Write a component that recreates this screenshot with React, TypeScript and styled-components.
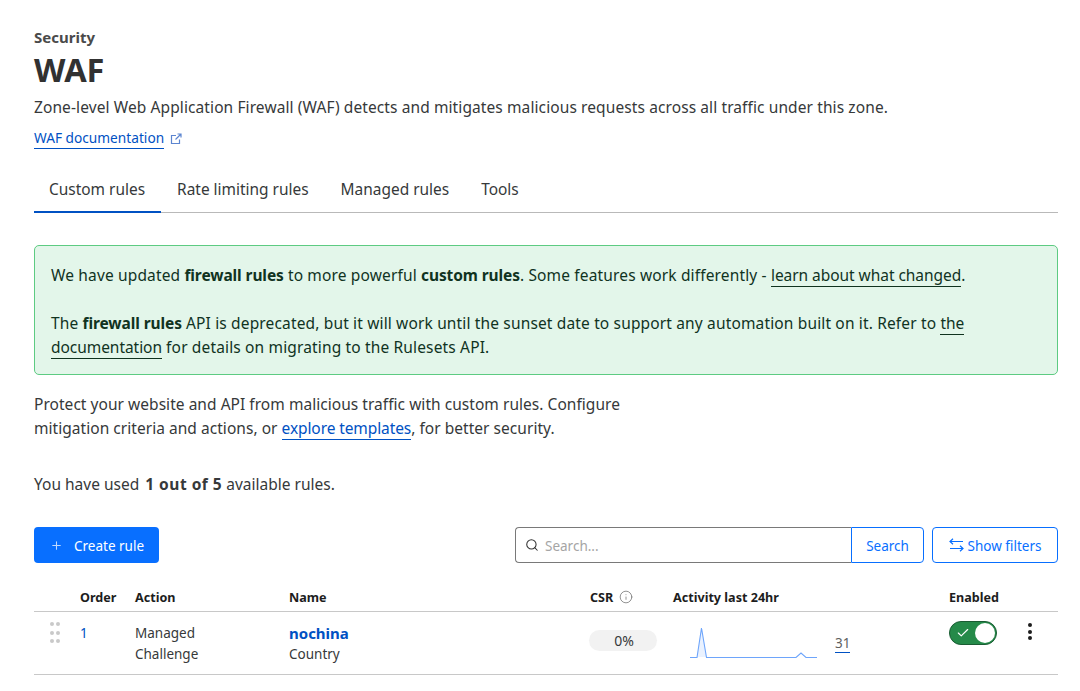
import React from "react";
import styled, { createGlobalStyle } from "styled-components";
import { Plus, Search as SearchIcon, Check, Info } from "lucide-react";

const GlobalStyle = createGlobalStyle`
  html, body {
    margin: 0;
    padding: 0;
    background: #fff;
  }
  body {
    font-family: "Noto Sans", "Open Sans", sans-serif;
    color: #36393a;
  }
`;

const Page = styled.div`
  width: 1080px;
  height: 691px;
  box-sizing: border-box;
  padding: 27px 22px 0 34px;
  overflow: hidden;
`;

const Eyebrow = styled.div`
  font-size: 15px;
  line-height: 20px;
  font-weight: 700;
  color: #4a4a4a;
`;

const Title = styled.h1`
  margin: 0 0 2px;
  font-size: 32.5px;
  line-height: 46px;
  font-weight: 700;
  color: #313131;
`;

const Lead = styled.p`
  margin: 0;
  font-size: 15.5px;
  line-height: 24px;
  letter-spacing: 0.1px;
  color: #36393a;
`;

const DocLink = styled.a`
  display: flex;
  align-items: center;
  gap: 6px;
  margin-top: 9px;
  font-size: 13.7px;
  line-height: 20px;
  color: #0051c3;

  span {
    border-bottom: 1px solid #0051c3;
  }

  svg {
    color: #5c85d0;
  }
`;

const Tabs = styled.div`
  display: flex;
  margin-top: 20px;
  border-bottom: 1px solid #b9b9b9;
`;

const Tab = styled.div<{ $active?: boolean }>`
  padding: 0 16px;
  height: 44px;
  line-height: 41px;
  font-size: 15.45px;
  color: #36393a;
  box-sizing: border-box;
  margin-bottom: -1px;
  border-bottom: 2px solid ${(p) => (p.$active ? "#0051c3" : "transparent")};

  &:first-child {
    padding-left: 15px;
  }
`;

const Notice = styled.div`
  margin-top: 32px;
  padding: 17px 16px 0;
  height: 130px;
  box-sizing: border-box;
  border: 1px solid #5dcb82;
  border-radius: 5px;
  background: #e3f6ea;
  color: #10331f;
  font-size: 15.5px;
  line-height: 24px;
  letter-spacing: 0.15px;

  p {
    margin: 0 0 24px;
  }
  p:last-child {
    margin: 0;
  }
  b {
    letter-spacing: -0.1px;
  }
  a {
    color: inherit;
    text-decoration: none;
    letter-spacing: -0.05px;
    border-bottom: 1px solid #10331f;
  }
`;

const Intro = styled.p`
  margin: 17px 0 0;
  width: 640px;
  font-size: 15.5px;
  line-height: 24px;
  letter-spacing: 0.04px;

  a {
    color: #0051c3;
    letter-spacing: -0.1px;
    border-bottom: 1px solid #0051c3;
  }
`;

const Usage = styled.p`
  margin: 32px 0 0;
  font-size: 15.5px;
  line-height: 24px;

  b {
    margin-left: 2px;
    letter-spacing: 0.5px;
  }
`;

const Toolbar = styled.div`
  display: flex;
  align-items: center;
  margin-top: 31px;
  height: 36px;
`;

const CreateButton = styled.button`
  display: flex;
  align-items: center;
  gap: 11px;
  width: 125px;
  height: 36px;
  padding: 2px 0 0 16px;
  border: none;
  border-radius: 4px;
  background: #086fff;
  color: #fff;
  font-family: inherit;
  font-size: 13.5px;

  svg {
    opacity: 0.75;
    margin-top: -2px;
  }
`;

const SearchGroup = styled.div`
  display: flex;
  margin-left: auto;
  height: 36px;
`;

const SearchBox = styled.div`
  display: flex;
  align-items: center;
  gap: 6px;
  width: 336px;
  box-sizing: border-box;
  padding: 2px 0 0 9px;
  border: 1px solid #797979;
  border-right: none;
  border-radius: 4px 0 0 4px;
  font-size: 13.5px;
  color: #a5a5a5;

  svg {
    color: #313131;
    margin-top: -2px;
  }
`;

const OutlineButton = styled.button<{ $joined?: boolean }>`
  display: flex;
  align-items: center;
  justify-content: center;
  gap: 4px;
  height: 36px;
  width: ${(p) => (p.$joined ? "73px" : "126px")};
  margin-left: ${(p) => (p.$joined ? "0" : "8px")};
  padding: 2px 0 0;
  border: 1px solid #086fff;
  border-radius: ${(p) => (p.$joined ? "0 4px 4px 0" : "4px")};
  background: #fff;
  color: #086fff;
  font-family: inherit;
  font-size: 13.5px;

  svg {
    margin-top: -2px;
  }
`;

const COLUMNS = "46px 55px 154px 301px 83px 276px 79px 1fr";

const HeaderRow = styled.div`
  display: grid;
  grid-template-columns: ${COLUMNS};
  align-items: center;
  margin-top: 20px;
  height: 28px;
  border-bottom: 1px solid #c8c8c8;
  font-size: 12.6px;
  font-weight: 700;
  color: #1d1d1d;
`;

const HeaderCell = styled.div`
  display: flex;
  align-items: center;
  gap: 6px;

  svg {
    color: #6f6f6f;
  }
`;

const Row = styled.div`
  display: grid;
  grid-template-columns: ${COLUMNS};
  height: 63px;
  box-sizing: border-box;
  border-bottom: 1px solid #c8c8c8;
  font-size: 13.5px;
  line-height: 21px;
  color: #36393a;
`;

const Cell = styled.div`
  padding-top: 11px;
`;

const Grip = styled.div`
  display: grid;
  grid-template-columns: 4px 4px;
  gap: 4.5px 2px;
  align-self: start;
  width: 10px;
  margin: 10px 0 0 16px;

  i {
    display: block;
    width: 4px;
    height: 4px;
    border-radius: 50%;
    background: #c9c9c9;
  }
`;

const OrderLink = styled.div`
  color: #0051c3;
`;

const RuleName = styled.div`
  font-size: 15px;
  font-weight: 700;
  color: #0051c3;
`;

const Pill = styled.div`
  display: flex;
  align-items: center;
  justify-content: center;
  width: 68px;
  height: 21px;
  margin: 7px 0 0 -1px;
  padding-left: 2px;
  box-sizing: border-box;
  border-radius: 11px;
  background: #f2f2f2;
  font-size: 14px;
`;

const ActivityCell = styled.div`
  display: flex;
  align-items: flex-start;
  padding: 15px 0 0 17px;
`;

const Count = styled.span`
  margin: 7px 0 0 17px;
  font-size: 13.5px;
  line-height: 18px;
  color: #5f5f5f;
  border-bottom: 1px solid #0051c3;
`;

const Toggle = styled.div`
  display: flex;
  align-items: center;
  justify-content: space-between;
  width: 48px;
  height: 24px;
  margin-top: -2px;
  box-sizing: border-box;
  padding: 0 1px 0 6px;
  border: 1px solid #1a5c33;
  border-radius: 12px;
  background: #258a49;
  color: #fff;
`;

const Knob = styled.span`
  width: 20px;
  height: 20px;
  border-radius: 50%;
  background: #fff;
`;

const Kebab = styled.div`
  display: flex;
  flex-direction: column;
  gap: 2.5px;
  width: 4px;

  i {
    display: block;
    width: 4px;
    height: 4px;
    border-radius: 50%;
    background: #1d1d1d;
  }
`;

const Sparkline = () => (
  <svg width="128" height="34" viewBox="0 0 128 34" fill="none">
    <path d="M7 30L11.5 1L16.5 30Z" fill="#eaf2ff" />
    <path d="M0 30.5H7L11.5 1L16.5 30.5H106L111 26L116 30.5H127" stroke="#6ea5fb" strokeWidth="1.1" />
  </svg>
);

const OpenIcon = () => (
  <svg width="12" height="12" viewBox="0 0 12 12" fill="none" stroke="currentColor" strokeWidth="1.2">
    <path d="M6 2.5H1.5V10.5H9.5V6.5" />
    <path d="M5.5 6.5L10.5 1.5M7.5 1H11V4.5" />
  </svg>
);

const SwapIcon = () => (
  <svg width="15" height="14" viewBox="0 0 15 14" fill="none" stroke="currentColor" strokeWidth="1.2">
    <path d="M1 3.5H14M4 .8L1 3.5L4 6.2" />
    <path d="M14 10.5H1M11 7.8L14 10.5L11 13.2" />
  </svg>
);

const App: React.FC = () => {
  return (
    <Page>
      <GlobalStyle />
      <Eyebrow>Security</Eyebrow>
      <Title>WAF</Title>
      <Lead>
        Zone-level Web Application Firewall (WAF) detects and mitigates malicious requests across all traffic under this zone.
      </Lead>
      <DocLink>
        <span>WAF documentation</span>
        <OpenIcon />
      </DocLink>

      <Tabs>
        <Tab $active>Custom rules</Tab>
        <Tab>Rate limiting rules</Tab>
        <Tab>Managed rules</Tab>
        <Tab>Tools</Tab>
      </Tabs>

      <Notice>
        <p>
          We have updated <b>firewall rules</b> to more powerful <b>custom rules</b>. Some features work differently - <a>learn about what changed</a>.
        </p>
        <p>
          The <b>firewall rules</b> API is deprecated, but it will work until the sunset date to support any automation built on it. Refer to <a>the</a> <a>documentation</a> for details on migrating to the Rulesets API.
        </p>
      </Notice>

      <Intro>
        Protect your website and API from malicious traffic with custom rules. Configure mitigation criteria and actions, or <a>explore templates</a>, for better security.
      </Intro>
      <Usage>
        You have used <b>1 out of 5</b> available rules.
      </Usage>

      <Toolbar>
        <CreateButton>
          <Plus size={13} />
          Create rule
        </CreateButton>
        <SearchGroup>
          <SearchBox>
            <SearchIcon size={14} strokeWidth={1.8} />
            Search...
          </SearchBox>
          <OutlineButton $joined>Search</OutlineButton>
          <OutlineButton>
            <SwapIcon />
            Show filters
          </OutlineButton>
        </SearchGroup>
      </Toolbar>

      <HeaderRow>
        <HeaderCell />
        <HeaderCell>Order</HeaderCell>
        <HeaderCell>Action</HeaderCell>
        <HeaderCell>Name</HeaderCell>
        <HeaderCell>
          CSR <Info size={14} strokeWidth={1.3} />
        </HeaderCell>
        <HeaderCell>Activity last 24hr</HeaderCell>
        <HeaderCell>Enabled</HeaderCell>
        <HeaderCell />
      </HeaderRow>
      <Row>
        <Grip>
          {Array.from({ length: 6 }).map((_, i) => (
            <i key={i} />
          ))}
        </Grip>
        <Cell>
          <OrderLink>1</OrderLink>
        </Cell>
        <Cell>
          Managed
          <br />
          Challenge
        </Cell>
        <Cell>
          <RuleName>nochina</RuleName>
          Country
        </Cell>
        <Cell>
          <Pill>0%</Pill>
        </Cell>
        <ActivityCell>
          <Sparkline />
          <Count>31</Count>
        </ActivityCell>
        <Cell>
          <Toggle>
            <Check size={14} strokeWidth={2} />
            <Knob />
          </Toggle>
        </Cell>
        <Cell>
          <Kebab>
            <i />
            <i />
            <i />
          </Kebab>
        </Cell>
      </Row>
    </Page>
  );
};

export default App;
